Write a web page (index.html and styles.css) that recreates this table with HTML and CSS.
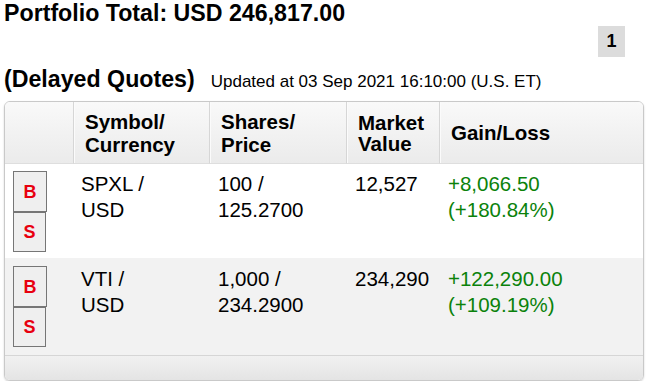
FILE: index.html
```html
<!DOCTYPE html>
<html>
<head>
<meta charset="utf-8">
<link rel="stylesheet" href="styles.css">
</head>
<body>
<div class="page">
  <h1 class="total">Portfolio Total: USD 246,817.00</h1>
  <div class="pager"><span class="page-num">1</span></div>
  <div class="quotes-head">
    <h2 class="delayed">(Delayed Quotes)</h2>
    <span class="updated">Updated at 03 Sep 2021 16:10:00 (U.S. ET)</span>
  </div>
  <div class="grid">
    <table class="holdings">
      <colgroup>
        <col class="c-act"><col class="c-sym"><col class="c-sh"><col class="c-mv"><col class="c-gl">
      </colgroup>
      <thead>
        <tr>
          <th class="act"></th>
          <th>Symbol/<br>Currency</th>
          <th>Shares/<br>Price</th>
          <th class="mv">Market<br>Value</th>
          <th>Gain/Loss</th>
        </tr>
      </thead>
      <tbody>
        <tr>
          <td class="act"><button class="btn btn-b">B</button><button class="btn btn-s">S</button></td>
          <td class="sym">SPXL /<br>USD</td>
          <td>100 /<br>125.2700</td>
          <td>12,527</td>
          <td class="gain">+8,066.50<br>(+180.84%)</td>
        </tr>
        <tr class="alt">
          <td class="act"><button class="btn btn-b">B</button><button class="btn btn-s">S</button></td>
          <td class="sym">VTI /<br>USD</td>
          <td>1,000 /<br>234.2900</td>
          <td>234,290</td>
          <td class="gain">+122,290.00<br>(+109.19%)</td>
        </tr>
      </tbody>
    </table>
    <div class="grid-foot"></div>
  </div>
</div>
</body>
</html>
```

FILE: styles.css
```css
html, body {
  margin: 0;
  padding: 0;
  background: #fff;
}
body {
  font-family: "Liberation Sans", Arial, sans-serif;
  color: #000;
}
.page {
  padding: 0 4px;
}
.total {
  margin: 0;
  font-size: 23.2px;
  line-height: 26px;
  font-weight: bold;
}
.pager {
  display: flex;
  justify-content: flex-end;
  padding-right: 19px;
}
.page-num {
  width: 27px;
  height: 31px;
  background: #dcdcdc;
  display: flex;
  align-items: center;
  justify-content: center;
  font-weight: bold;
  font-size: 18px;
}
.quotes-head {
  display: flex;
  align-items: baseline;
  gap: 16px;
  margin-top: 9px;
}
.delayed {
  margin: 0;
  font-size: 23.2px;
  line-height: 26px;
  font-weight: bold;
}
.updated {
  font-size: 17px;
}
.grid {
  margin-top: 9px;
  width: 640px;
  box-sizing: border-box;
  border: 1px solid #c9c9c9;
  border-radius: 6px;
  overflow: hidden;
  box-shadow: 0 1px 2px rgba(0, 0, 0, 0.18);
}
.holdings {
  width: 100%;
  border-collapse: separate;
  border-spacing: 0;
  table-layout: fixed;
}
.c-act { width: 68px; }
.c-sym { width: 136px; }
.c-sh { width: 137px; }
.c-mv { width: 93px; }
.c-gl { width: 204px; }
.holdings th {
  height: 62px;
  box-sizing: border-box;
  padding: 0 10px 0 11px;
  text-align: left;
  vertical-align: middle;
  font-size: 20.5px;
  line-height: 23px;
  font-weight: bold;
  background: linear-gradient(#f9f9f9, #ebebeb);
  border-bottom: 1px solid #dedede;
  border-left: 1px solid #d6d6d6;
  box-shadow: inset 1px 0 0 #fbfbfb;
}
.holdings th.act {
  border-left: 0;
  box-shadow: none;
}
.holdings th.mv {
  line-height: 21px;
}
.holdings td {
  padding: 7px 8px 6px 9px;
  vertical-align: top;
  font-size: 20.5px;
  line-height: 26px;
  background: #fff;
}
.holdings td.sym {
  padding-left: 8px;
}
.holdings td.act {
  padding-left: 8px;
}
.holdings tr.alt td {
  background: #f2f2f2;
  padding-top: 8px;
  padding-bottom: 8px;
}
.gain {
  color: #0b820b;
}
.btn {
  display: block;
  box-sizing: border-box;
  margin: 0;
  padding: 0;
  border: 1px solid #767676;
  border-radius: 0;
  background: #efefef;
  color: #e8000f;
  font-family: "Liberation Sans", Arial, sans-serif;
  font-weight: bold;
  font-size: 18px;
  line-height: 1;
}
.btn-b {
  width: 34px;
  height: 41px;
}
.btn-s {
  width: 33px;
  height: 40px;
}
.grid-foot {
  height: 24px;
  border-top: 1px solid #d6d6d6;
  background: linear-gradient(#f1f1f1, #e4e4e4);
}
```
